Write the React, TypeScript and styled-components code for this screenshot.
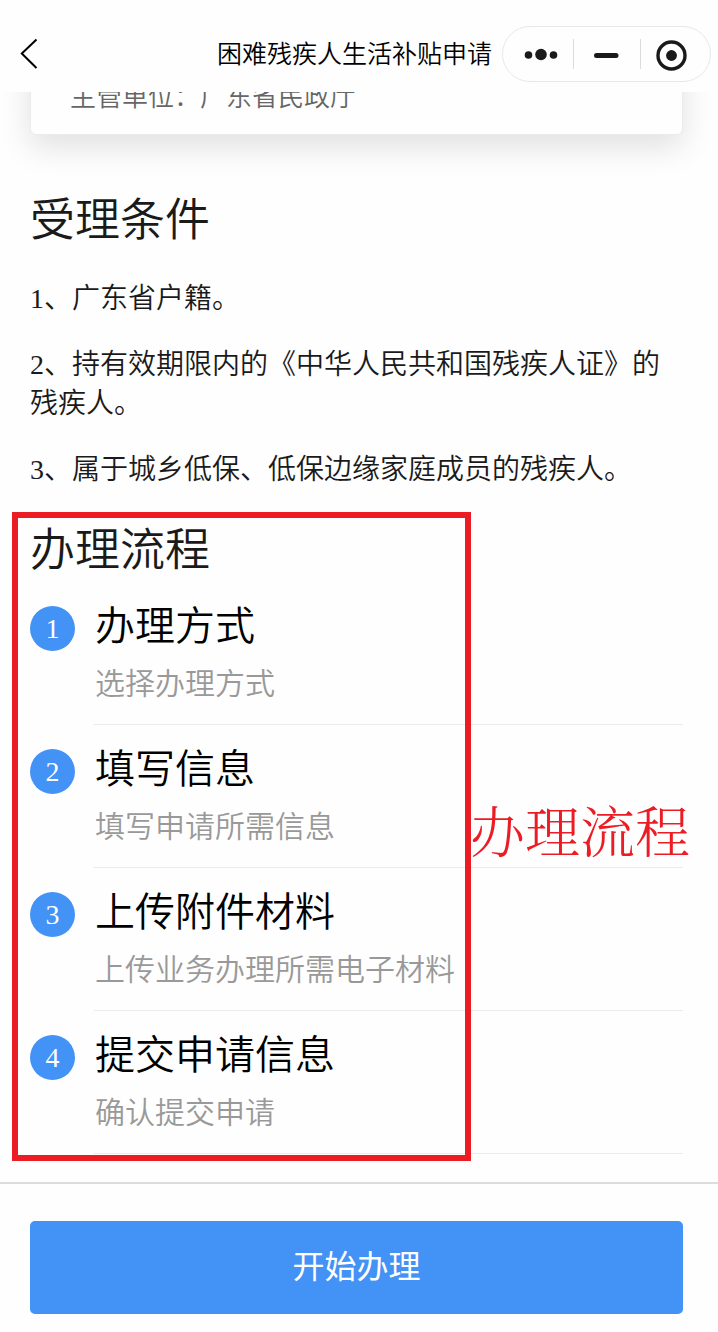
import React from "react";
import styled, { createGlobalStyle } from "styled-components";

const GlobalStyle = createGlobalStyle`
  *, *::before, *::after { box-sizing: border-box; }
  body { margin: 0; background: #fefefe; }
  h1, h2, h3, p, ol { margin: 0; padding: 0; font-weight: inherit; }
  button { margin: 0; padding: 0; border: 0; background: none; color: inherit; font: inherit; cursor: pointer; }
`;

const sans = `"Noto Sans CJK SC", sans-serif`;
const mixed = `"Liberation Serif", "Noto Sans CJK SC", serif`;

const Page = styled.div`
  display: flex;
  flex-direction: column;
  min-height: 100vh;
  overflow: hidden;
  font-family: ${sans};
  font-weight: 350;
  color: #1a1a1a;
`;

const Header = styled.header`
  position: relative;
  z-index: 1;
  display: flex;
  align-items: center;
  gap: 10px;
  padding: 26px 7px 10px 20px;
  background: #fefefe;
`;

const BackButton = styled.button`
  display: flex;
  margin-right: auto;
`;

const PageTitle = styled.h1`
  padding-bottom: 4px;
  font-size: 25px;
  line-height: 36px;
  white-space: nowrap;
  color: #000;
`;

const Capsule = styled.div`
  display: flex;
  align-items: center;
  flex: none;
  height: 56px;
  border: 1px solid #e8e8e8;
  border-radius: 28px;
`;

const CapsuleButton = styled.button`
  display: flex;
  & + & { border-left: 1px solid #dcdcdc; }
`;

const Content = styled.main`
  flex: 1;
  padding: 0 35px 28px 30px;
`;

const Card = styled.section`
  margin-top: -39px;
  padding: 24px 39px 22px;
  border: 1px solid #ebebeb;
  border-radius: 6px;
  background: #fefefe;
  box-shadow: 0 12px 32px rgba(0, 0, 0, 0.12);
  font-size: 26px;
  line-height: 34px;
  color: #666;
`;

const SectionTitle = styled.h2`
  font-size: 45px;
  line-height: 60px;
`;

const Conditions = styled.section`
  padding-top: 56px;
  font-family: ${mixed};
  font-size: 28px;
  line-height: 39px;

  ${SectionTitle} { margin-bottom: 28px; }
  p + p { margin-top: 27px; }
`;

const Process = styled.section`
  position: relative;
  margin-top: 28px;
`;

const StepList = styled.ol`
  margin-top: 5px;
  list-style: none;
`;

const Step = styled.li`
  display: flex;
  gap: 19px;
`;

const StepNumber = styled.span`
  flex: none;
  width: 45px;
  height: 45px;
  margin-top: 24px;
  border-radius: 50%;
  background: #4392f5;
  color: #fff;
  font-family: ${mixed};
  font-size: 28px;
  font-weight: 400;
  line-height: 45px;
  text-align: center;
`;

const StepBody = styled.div`
  flex: 1;
  padding: 13px 0 23px 1px;
  border-bottom: 1px solid #ebebeb;
`;

const StepTitle = styled.h3`
  font-size: 40px;
  line-height: 56px;
  color: #000;
`;

const StepText = styled.p`
  margin-top: 10px;
  font-size: 30px;
  line-height: 40px;
  color: #999;
`;

const Highlight = styled.div`
  position: absolute;
  top: -5px;
  bottom: -7px;
  left: -18px;
  width: 459px;
  border: 6px solid #ec1c24;
  pointer-events: none;
`;

const HighlightLabel = styled.div`
  position: absolute;
  top: 272px;
  left: 440px;
  font-family: "Noto Serif CJK SC", "Noto Sans CJK SC", serif;
  font-size: 55px;
  font-weight: 300;
  line-height: 80px;
  white-space: nowrap;
  color: #ec1c24;
`;

const Footer = styled.footer`
  padding: 37px 35px 18px 30px;
  border-top: 2px solid #dcdcdc;
`;

const StartButton = styled.button`
  display: block;
  width: 100%;
  height: 93px;
  padding-bottom: 8px;
  border-radius: 5px;
  background: #4392f5;
  color: #fff;
  font-size: 32px;
  font-weight: 400;
  line-height: 48px;
`;

const conditions = [
  "1、广东省户籍。",
  "2、持有效期限内的《中华人民共和国残疾人证》的残疾人。",
  "3、属于城乡低保、低保边缘家庭成员的残疾人。",
];

const steps = [
  { title: "办理方式", text: "选择办理方式" },
  { title: "填写信息", text: "填写申请所需信息" },
  { title: "上传附件材料", text: "上传业务办理所需电子材料" },
  { title: "提交申请信息", text: "确认提交申请" },
];

export default function App() {
  return (
    <Page lang="zh-CN">
      <GlobalStyle />
      <Header>
        <BackButton aria-label="返回">
          <svg width="18" height="32" viewBox="0 0 18 32" fill="none" stroke="#000" strokeWidth="2">
            <path d="M16.5 1.5 1.8 15.5 16.5 30" />
          </svg>
        </BackButton>
        <PageTitle>困难残疾人生活补贴申请</PageTitle>
        <Capsule>
          <CapsuleButton aria-label="更多">
            <svg width="70" height="30" viewBox="0 0 70 30" fill="#1a1a1a">
              <circle cx="25.5" cy="16" r="3.8" />
              <circle cx="38" cy="15.5" r="5.8" />
              <circle cx="50.5" cy="16" r="3.8" />
            </svg>
          </CapsuleButton>
          <CapsuleButton aria-label="最小化">
            <svg width="66" height="30" viewBox="0 0 66 30" stroke="#1a1a1a" strokeWidth="5" strokeLinecap="round">
              <path d="M22.5 16.5h19.5" />
            </svg>
          </CapsuleButton>
          <CapsuleButton aria-label="关闭">
            <svg width="69" height="30" viewBox="0 0 69 30" fill="none" overflow="visible">
              <circle cx="30.5" cy="16.5" r="13.5" stroke="#1a1a1a" strokeWidth="3.4" />
              <circle cx="30.5" cy="16.5" r="5.4" fill="#1a1a1a" />
            </svg>
          </CapsuleButton>
        </Capsule>
      </Header>

      <Content>
        <Card>主管单位：广东省民政厅</Card>

        <Conditions>
          <SectionTitle>受理条件</SectionTitle>
          {conditions.map((item) => (
            <p key={item}>{item}</p>
          ))}
        </Conditions>

        <Process>
          <SectionTitle>办理流程</SectionTitle>
          <StepList>
            {steps.map((step, index) => (
              <Step key={step.title}>
                <StepNumber>{index + 1}</StepNumber>
                <StepBody>
                  <StepTitle>{step.title}</StepTitle>
                  <StepText>{step.text}</StepText>
                </StepBody>
              </Step>
            ))}
          </StepList>
          <Highlight />
          <HighlightLabel>办理流程</HighlightLabel>
        </Process>
      </Content>

      <Footer>
        <StartButton>开始办理</StartButton>
      </Footer>
    </Page>
  );
}
